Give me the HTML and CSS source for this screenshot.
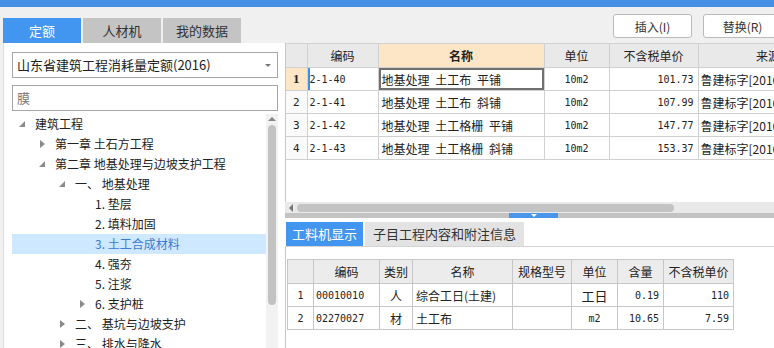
FILE: index.html
```html
<!DOCTYPE html>
<html lang="zh-CN">
<head>
    <meta charset="UTF-8">
    <title>定额库</title>
    <link rel="stylesheet" href="styles.css">
</head>
<body>
    <div class="topbar"></div>
    <div class="main">
        <!-- left: quota library tree -->
        <div class="left">
            <div class="tabs">
                <div class="tab active">定额</div>
                <div class="tab">人材机</div>
                <div class="tab">我的数据</div>
            </div>
            <div class="panel">
                <div class="select">
                    <span>山东省建筑工程消耗量定额(2016)</span>
                    <i class="caret"></i>
                </div>
                <div class="search">膜</div>
                <div class="tree-wrap">
                    <ul class="tree">
                        <li class="lv0"><i class="open"></i>建筑工程</li>
                        <li class="lv1"><i class="closed"></i>第一章 土石方工程</li>
                        <li class="lv1"><i class="open"></i>第二章 地基处理与边坡支护工程</li>
                        <li class="lv2"><i class="open"></i>一、 地基处理</li>
                        <li class="lv3"><i></i>1. 垫层</li>
                        <li class="lv3"><i></i>2. 填料加固</li>
                        <li class="lv3 selected"><i></i>3. 土工合成材料</li>
                        <li class="lv3"><i></i>4. 强夯</li>
                        <li class="lv3"><i></i>5. 注浆</li>
                        <li class="lv3"><i class="closed"></i>6. 支护桩</li>
                        <li class="lv2"><i class="closed"></i>二、 基坑与边坡支护</li>
                        <li class="lv2"><i class="closed"></i>三、 排水与降水</li>
                    </ul>
                    <div class="vscroll">
                        <i class="up"></i>
                        <div class="vthumb"></div>
                    </div>
                </div>
            </div>
        </div>

        <!-- right: quota items and resources -->
        <div class="right">
            <div class="toolbar">
                <button class="btn">插入(I)</button>
                <button class="btn">替换(R)</button>
            </div>
            <div class="grid-area">
                <table class="grid items">
                    <colgroup>
                        <col style="width:21px"><col style="width:71px"><col style="width:166px">
                        <col style="width:65px"><col style="width:89px"><col style="width:140px">
                    </colgroup>
                    <thead>
                        <tr>
                            <th></th>
                            <th>编码</th>
                            <th class="hl">名称</th>
                            <th>单位</th>
                            <th>不含税单价</th>
                            <th>来源</th>
                        </tr>
                    </thead>
                    <tbody>
                        <tr>
                            <td class="no cur">1</td>
                            <td class="mono code sel">2-1-40</td>
                            <td class="name focus">地基处理 土工布 平铺</td>
                            <td class="mono mid">10m2</td>
                            <td class="mono num">101.73</td>
                            <td class="src">鲁建标字[2016]39号</td>
                        </tr>
                        <tr>
                            <td class="no">2</td>
                            <td class="mono code">2-1-41</td>
                            <td class="name">地基处理 土工布 斜铺</td>
                            <td class="mono mid">10m2</td>
                            <td class="mono num">107.99</td>
                            <td class="src">鲁建标字[2016]39号</td>
                        </tr>
                        <tr>
                            <td class="no">3</td>
                            <td class="mono code">2-1-42</td>
                            <td class="name">地基处理 土工格栅 平铺</td>
                            <td class="mono mid">10m2</td>
                            <td class="mono num">147.77</td>
                            <td class="src">鲁建标字[2016]39号</td>
                        </tr>
                        <tr>
                            <td class="no">4</td>
                            <td class="mono code">2-1-43</td>
                            <td class="name">地基处理 土工格栅 斜铺</td>
                            <td class="mono mid">10m2</td>
                            <td class="mono num">153.37</td>
                            <td class="src">鲁建标字[2016]39号</td>
                        </tr>
                    </tbody>
                </table>
            </div>
            <div class="hscroll">
                <i class="left-arrow"></i>
                <div class="hthumb"></div>
            </div>
            <div class="splitter"><div class="grip"><i></i></div></div>
            <div class="lower">
                <div class="subtabs">
                    <div class="subtab active">工料机显示</div>
                    <div class="subtab">子目工程内容和附注信息</div>
                </div>
                <div class="lower-body">
                    <table class="grid res">
                        <colgroup>
                            <col style="width:26px"><col style="width:66px"><col style="width:33px">
                            <col style="width:100px"><col style="width:59px"><col style="width:46px">
                            <col style="width:46px"><col style="width:70px">
                        </colgroup>
                        <thead>
                            <tr>
                                <th></th>
                                <th>编码</th>
                                <th>类别</th>
                                <th>名称</th>
                                <th>规格型号</th>
                                <th>单位</th>
                                <th>含量</th>
                                <th>不含税单价</th>
                            </tr>
                        </thead>
                        <tbody>
                            <tr>
                                <td class="mono mid">1</td>
                                <td class="mono code">00010010</td>
                                <td class="mid">人</td>
                                <td class="name">综合工日(土建)</td>
                                <td></td>
                                <td class="mid big">工日</td>
                                <td class="mono num">0.19</td>
                                <td class="mono num">110</td>
                            </tr>
                            <tr>
                                <td class="mono mid">2</td>
                                <td class="mono code">02270027</td>
                                <td class="mid">材</td>
                                <td class="name">土工布</td>
                                <td></td>
                                <td class="mono mid">m2</td>
                                <td class="mono num">10.65</td>
                                <td class="mono num">7.59</td>
                            </tr>
                        </tbody>
                    </table>
                </div>
            </div>
        </div>
    </div>
</body>
</html>
```

FILE: styles.css
```css
body {
    margin: 0;
    background-color: #f0f0f0;
    font-family: "Noto Sans CJK SC", "Microsoft YaHei", sans-serif;
    font-size: 12px;
    color: #222;
    overflow: hidden;
}
.topbar {
    height: 7px;
    background-color: #4590e4;
}
.main {
    display: flex;
    height: 341px;
    overflow: hidden;
}

/* left panel */
.left {
    width: 282px;
    margin-left: 3px;
    display: flex;
    flex-direction: column;
    flex-shrink: 0;
}
.tabs {
    display: flex;
    gap: 2px;
    padding-top: 11px;
}
.tab {
    width: 78px;
    height: 25px;
    line-height: 25px;
    text-align: center;
    background-color: #c4c4c4;
    color: #333;
    font-size: 13px;
}
.tab.active {
    background-color: #4396f0;
    color: #fff;
}
.panel {
    flex: 1;
    min-height: 0;
    overflow: hidden;
    background-color: #fff;
    border-left: 1px solid #dcdcdc;
    padding: 9px 0 0 8px;
}
.select, .search {
    height: 24px;
    border: 1px solid #a6a6a6;
    line-height: 24px;
    padding-left: 4px;
    font-size: 13px;
}
.select {
    width: 260px;
    display: flex;
    justify-content: space-between;
    align-items: center;
}
.select .caret {
    width: 0;
    height: 0;
    border-left: 3px solid transparent;
    border-right: 3px solid transparent;
    border-top: 3px solid #777;
    margin-right: 6px;
}
.search {
    width: 260px;
    margin-top: 7px;
    color: #777;
}
.tree-wrap {
    display: flex;
    margin-top: 3px;
}
.tree {
    list-style: none;
    margin: 0;
    padding: 0;
    width: 254px;
}
.tree li {
    height: 20px;
    line-height: 20px;
    display: flex;
    align-items: center;
    white-space: nowrap;
    font-size: 12px;
}
.tree li i {
    width: 16px;
    flex-shrink: 0;
    display: flex;
    align-items: center;
}
.tree li i.open::before {
    content: "";
    border-bottom: 6px solid #8a8a8a;
    border-left: 6px solid transparent;
}
.tree li i.closed::before {
    content: "";
    border-left: 5px solid #8a8a8a;
    border-top: 4px solid transparent;
    border-bottom: 4px solid transparent;
    margin-left: 1px;
}
.tree .lv0 { padding-left: 7px; }
.tree .lv1 { padding-left: 27px; }
.tree .lv2 { padding-left: 47px; }
.tree .lv3 { padding-left: 67px; }
.tree li.selected {
    background-color: #cde8ff;
    color: #3a7cd0;
}
.vscroll {
    width: 12px;
    height: 240px;
    background-color: #f2f2f2;
    display: flex;
    flex-direction: column;
    align-items: center;
}
.vscroll .up {
    margin-top: 3px;
    border-bottom: 4px solid #888;
    border-left: 4px solid transparent;
    border-right: 4px solid transparent;
}
.vthumb {
    margin-top: 4px;
    width: 8px;
    height: 180px;
    border-radius: 4px;
    background-color: #c2c2c2;
}

/* right side */
.right {
    flex: 1;
    min-width: 0;
    display: flex;
    flex-direction: column;
    overflow: hidden;
}
.toolbar {
    height: 36px;
    flex-shrink: 0;
    display: flex;
    gap: 11px;
    padding: 7px 0 0 328px;
    box-sizing: border-box;
}
.btn {
    width: 79px;
    height: 24px;
    flex-shrink: 0;
    background-color: #fff;
    border: 1px solid #bababa;
    border-radius: 3px;
    font-family: inherit;
    font-size: 12px;
    color: #333;
    padding: 0;
}
.grid-area {
    height: 159px;
    flex-shrink: 0;
    background-color: #fff;
    border-left: 1px solid #c8c8c8;
    overflow: hidden;
}
.grid {
    border-collapse: collapse;
    table-layout: fixed;
}
.grid th, .grid td {
    border: 1px solid #d0d0d0;
    padding: 0 3px;
    white-space: nowrap;
    overflow: hidden;
    font-weight: normal;
}
.grid th {
    background-color: #e9e9e9;
    text-align: center;
}
.items {
    width: 552px;
}
.items tr > :first-child {
    border-left: none;
}
.items th { height: 23px; }
.items td { height: 22px; }
.items th.hl {
    background-color: #fde6c6;
    font-weight: bold;
}
.mono {
    font-family: "DejaVu Sans Mono", "Liberation Mono", monospace;
    font-size: 10px;
}
.grid td.no {
    text-align: center;
    font-family: "DejaVu Sans Mono", monospace;
    font-size: 11px;
    background-color: #fafafa;
}
.grid td.no.cur {
    background-color: #fde6c6;
    font-weight: bold;
    font-family: "Liberation Serif", serif;
    font-size: 13px;
}
.grid td.code { padding-left: 2px; }
.grid td.sel { box-shadow: inset 2px 0 0 #3d8fe8; }
.grid td.name { font-size: 12px; word-spacing: 3px; }
.grid td.focus { box-shadow: inset 0 0 0 2px #707070; }
.grid td.mid { text-align: center; }
.grid td.num { text-align: right; padding-right: 4px; }
.grid td.src { font-size: 12px; padding-left: 2px; }
.hscroll {
    height: 11px;
    flex-shrink: 0;
    background-color: #e9e9e9;
    display: flex;
    align-items: center;
    padding-left: 4px;
    gap: 4px;
}
.hscroll .left-arrow {
    border-right: 4px solid #777;
    border-top: 4px solid transparent;
    border-bottom: 4px solid transparent;
}
.hthumb {
    width: 377px;
    height: 8px;
    border-radius: 4px;
    background-color: #c3c3c3;
}
.splitter {
    height: 5px;
    flex-shrink: 0;
    background-color: #c3c3c3;
    padding-left: 224px;
}
.grip {
    width: 49px;
    height: 5px;
    background-color: #4a94ea;
    display: flex;
    justify-content: center;
}
.grip i {
    border-top: 3px solid #fff;
    border-left: 3px solid transparent;
    border-right: 3px solid transparent;
    margin-top: 1px;
    height: 0;
}
.lower {
    flex: 1;
    min-height: 0;
    display: flex;
    flex-direction: column;
    background-color: #fff;
}
.subtabs {
    display: flex;
    gap: 2px;
    padding: 4px 0 0 1px;
    border-bottom: 1px solid #d4d4d4;
}
.subtab {
    height: 24px;
    line-height: 24px;
    padding: 0 8px;
    background-color: #e3e3e3;
    font-size: 13px;
    color: #333;
}
.subtab.active {
    width: 77px;
    padding: 0;
    text-align: center;
    background-color: #4396f0;
    color: #fff;
}
.lower-body {
    flex: 1;
    border-left: 1px solid #c8c8c8;
    padding: 12px 0 0 1px;
}
.res th, .res td {
    border-color: #c6c6c6;
}
.res th {
    background-color: #ececec;
    font-size: 12px;
    height: 23px;
}
.res td { height: 22px; }
.res td.big { font-size: 13px; }
```
